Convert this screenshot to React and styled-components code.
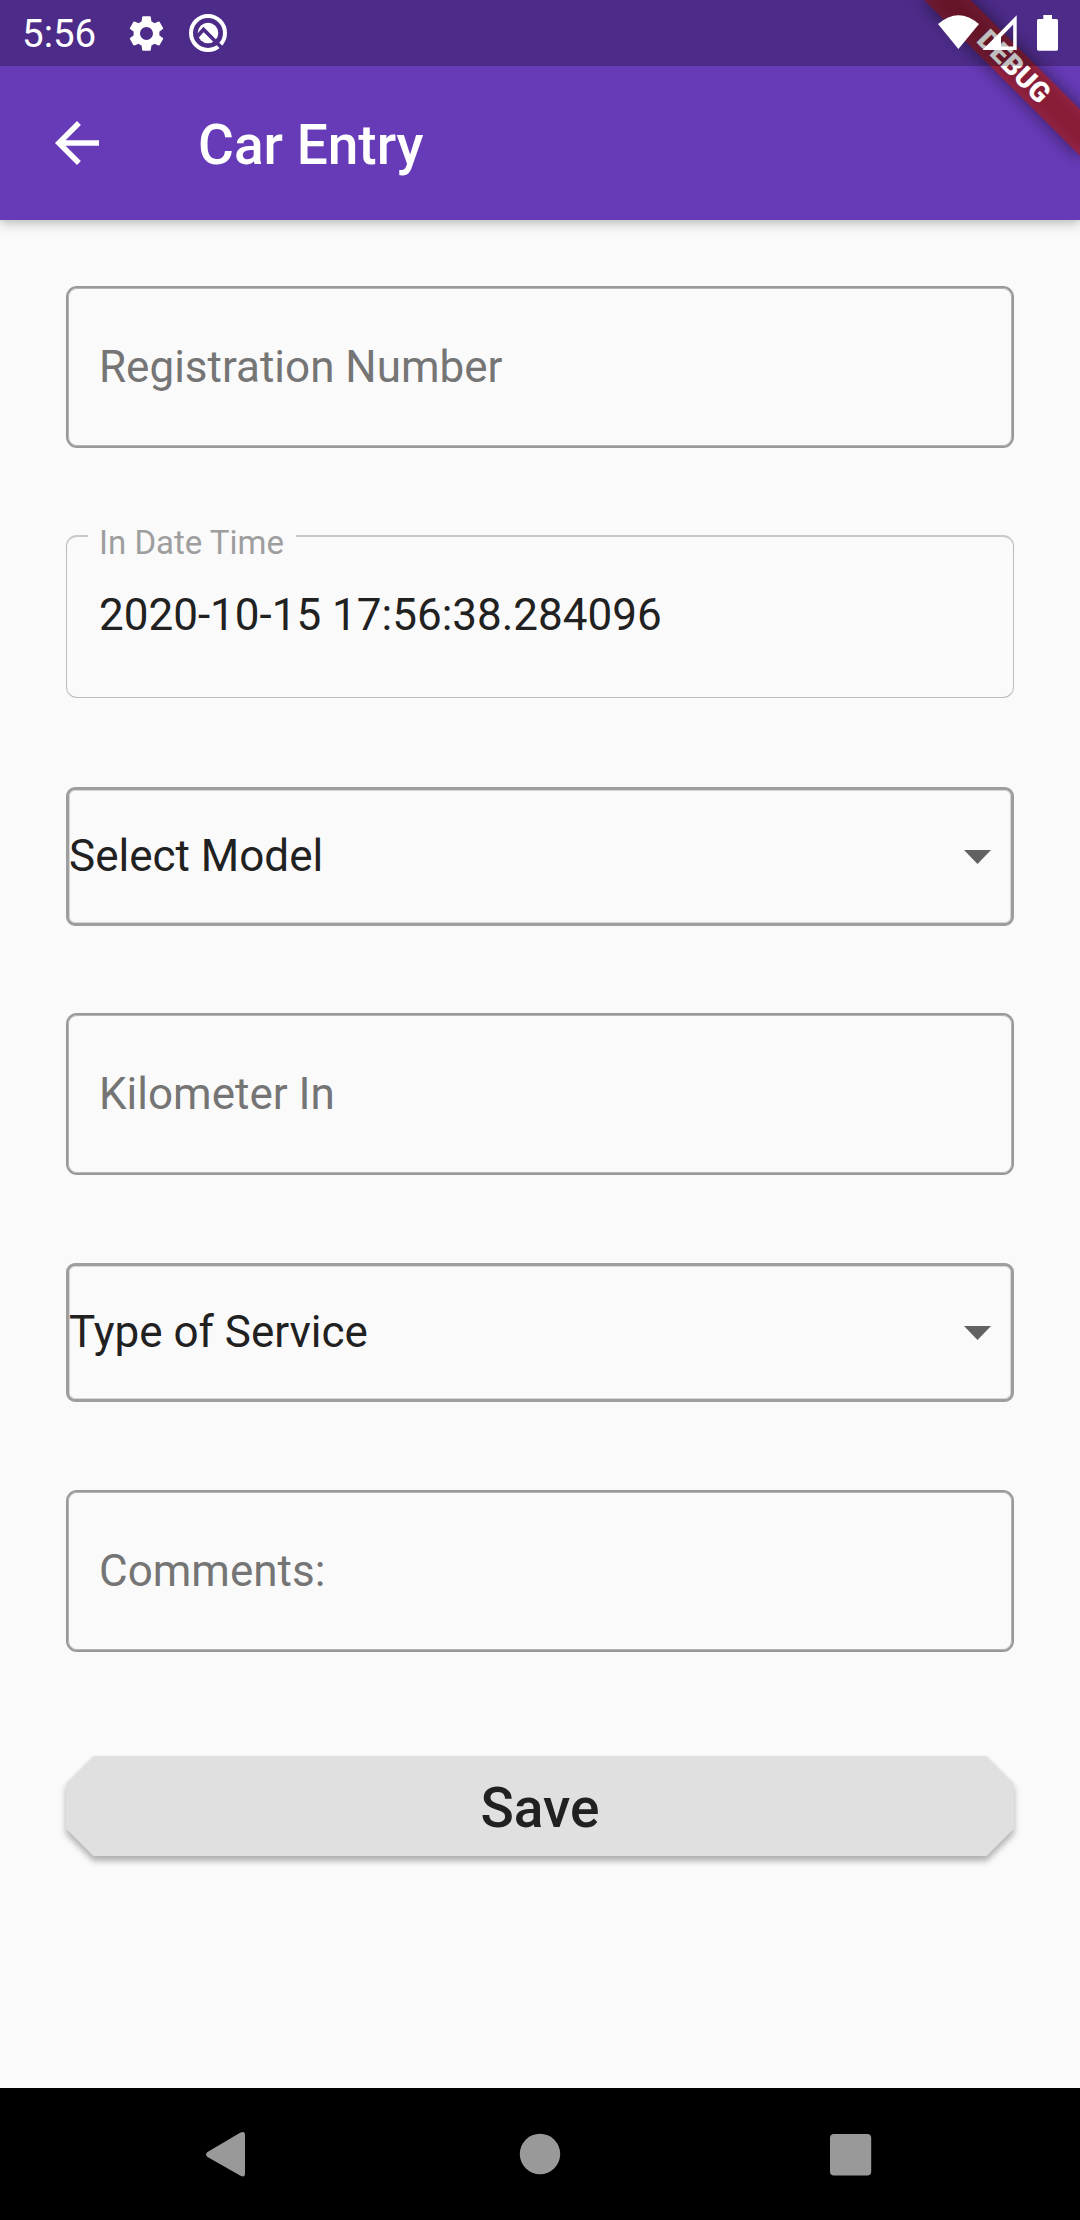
import React from "react";
import styled, { createGlobalStyle } from "styled-components";
import { MdArrowBack, MdSettings } from "react-icons/md";

const GlobalStyle = createGlobalStyle`
  *, *::before, *::after { box-sizing: border-box; }
  body { margin: 0; background: #fafafa; }
`;

const Screen = styled.div`
  width: 1080px;
  height: 2220px;
  display: flex;
  flex-direction: column;
  background: #fafafa;
  color: #212121;
  font-family: Roboto, "Liberation Sans", sans-serif;
  font-size: 44px;
  overflow: hidden;
`;

const Header = styled.header`
  position: relative;
  flex: none;
  height: 220px;
  background: #673ab7;
  color: #fff;
  box-shadow: 0 4px 12px rgba(0, 0, 0, 0.2), 0 2px 6px rgba(0, 0, 0, 0.08);
`;

const StatusBar = styled.div`
  position: relative;
  z-index: 2;
  height: 66px;
  padding: 0 21px 0 22px;
  display: flex;
  align-items: center;
  justify-content: space-between;
  background: rgba(0, 0, 0, 0.25);
`;

const StatusGroup = styled.div`
  display: flex;
  align-items: center;
`;

const Clock = styled.span`
  width: 103px;
  font-size: 38.5px;
  line-height: 66px;
  padding-top: 2px;
`;

const GearIcon = styled(MdSettings)`
  width: 43px;
  height: 43px;
  margin-right: 20px;
`;

const AppBar = styled.div`
  height: 154px;
  padding-left: 44px;
  display: flex;
  align-items: center;
`;

const BackIcon = styled(MdArrowBack)`
  width: 66px;
  height: 66px;
`;

const Title = styled.h1`
  margin: 0 0 0 88px;
  font-size: 55px;
  font-weight: 500;
  line-height: 64px;
  padding-top: 3px;
`;

const BannerClip = styled.div`
  position: absolute;
  inset: 0;
  overflow: hidden;
  pointer-events: none;
`;

const Banner = styled.div`
  position: absolute;
  left: 904px;
  top: 49.5px;
  width: 220px;
  height: 33px;
  transform: rotate(45deg);
  background: rgba(183, 28, 28, 0.63);
  text-align: center;
  font-size: 28px;
  font-weight: 900;
  line-height: 33px;
`;

const BannerShadow = styled(Banner)`
  background: rgba(0, 0, 0, 0.5);
  filter: blur(9px);
`;

const Form = styled.main`
  flex: 1;
  padding: 66px 66px 0;
  display: flex;
  flex-direction: column;
`;

const TextField = styled.div`
  height: 162px;
  margin-bottom: ${(p) => p.$gap}px;
  padding: 0 31px;
  display: flex;
  align-items: center;
  border: 2px solid #999;
  border-radius: 11px;
  box-shadow: inset 0 0 0 1px #b5b5b5;
  color: #757575;
  line-height: 52px;
`;

const DisabledField = styled.div`
  position: relative;
  height: 163px;
  margin-bottom: ${(p) => p.$gap}px;
  padding: 52px 32px 0;
  border: 1px solid #bdbdbd;
  border-top: 2px solid #c8c8c8;
  border-radius: 11px;
  line-height: 52px;
`;

const FieldLabel = styled.span`
  position: absolute;
  top: -13px;
  left: 21px;
  width: 208px;
  padding-left: 11px;
  background: #fafafa;
  font-size: 33px;
  line-height: 38px;
  white-space: nowrap;
  color: #9e9e9e;
`;

const Dropdown = styled.div`
  height: 139px;
  margin-bottom: ${(p) => p.$gap}px;
  padding: 0 20px 2px 0;
  display: flex;
  align-items: center;
  justify-content: space-between;
  border: 3px solid #9e9e9e;
  border-radius: 9px;
  box-shadow: inset 0 0 0 1px #d5d5d5;
  line-height: 52px;
`;

const CaretIcon = styled.svg`
  width: 27px;
  height: 14px;
  margin-top: 3px;
`;

const ButtonShadow = styled.div`
  filter: drop-shadow(0 5px 3px rgba(0, 0, 0, 0.3));
`;

const SaveButton = styled.button`
  display: block;
  width: 100%;
  height: 100px;
  padding: 3px 0 0;
  border: 0;
  background: #e0e0e0;
  color: #212121;
  font: 500 55px/64px Roboto, "Liberation Sans", sans-serif;
  clip-path: polygon(27.5px 0, calc(100% - 27.5px) 0, 100% 27.5px, 100% calc(100% - 27.5px), calc(100% - 27.5px) 100%, 27.5px 100%, 0 calc(100% - 27.5px), 0 27.5px);
`;

const NavBar = styled.nav`
  flex: none;
  height: 132px;
  padding: 0 154px;
  display: flex;
  align-items: center;
  justify-content: space-between;
  background: #000;
`;

function DebugLogo() {
  return (
    <svg width="40" height="40" viewBox="0 0 40 40" fill="none">
      <circle cx="20" cy="20" r="17" stroke="#fff" strokeWidth="4" />
      <circle cx="20" cy="20" r="10.3" fill="#fff" />
      <path d="M8 25 L15.5 16.5 L35 36" stroke="#4d2c89" strokeWidth="3.6" />
    </svg>
  );
}

function StatusIcons() {
  return (
    <svg width="122" height="40" viewBox="937 13 122 40" fill="#fff">
      <path d="M938 24 Q958.5 6.5 979 24 L958.4 49 Z" />
      <path fillRule="evenodd" d="M982.5 50 L1016.7 15.2 V50 Z M1001 46.5 H1013.2 V24.5 L1001 37 Z" />
      <path d="M1043.3 15 H1052 V19 H1056.5 Q1058 19 1058 20.5 V49 Q1058 50.7 1056.5 50.7 H1038.5 Q1037 50.7 1037 49 V20.5 Q1037 19 1038.5 19 H1043.3 Z" />
    </svg>
  );
}

function Caret() {
  return (
    <CaretIcon viewBox="0 0 27 14">
      <path d="M0 0 H27 L13.5 14 Z" fill="#616161" />
    </CaretIcon>
  );
}

export default function App() {
  return (
    <Screen>
      <GlobalStyle />
      <Header>
        <BannerClip>
          <BannerShadow />
          <Banner>DEBUG</Banner>
        </BannerClip>
        <StatusBar>
          <StatusGroup>
            <Clock>5:56</Clock>
            <GearIcon />
            <DebugLogo />
          </StatusGroup>
          <StatusIcons />
        </StatusBar>
        <AppBar>
          <BackIcon />
          <Title>Car Entry</Title>
        </AppBar>
      </Header>
      <Form>
        <TextField $gap={87}>Registration Number</TextField>
        <DisabledField $gap={89}>
          <FieldLabel>In Date Time</FieldLabel>
          2020-10-15 17:56:38.284096
        </DisabledField>
        <Dropdown $gap={87}>
          Select Model
          <Caret />
        </Dropdown>
        <TextField $gap={88}>Kilometer In</TextField>
        <Dropdown $gap={88}>
          Type of Service
          <Caret />
        </Dropdown>
        <TextField $gap={104}>Comments:</TextField>
        <ButtonShadow>
          <SaveButton type="button">Save</SaveButton>
        </ButtonShadow>
      </Form>
      <NavBar>
        <svg width="144" height="48" viewBox="154 2130 144 48" fill="#999">
          <path d="M207.5 2152 L240.5 2132.6 Q245 2130.5 245 2135 V2173.5 Q245 2178 240.5 2175.8 L207.5 2157 Q204.5 2154.5 207.5 2152 Z" />
        </svg>
        <svg width="144" height="48" viewBox="468 2130 144 48" fill="#999">
          <circle cx="540" cy="2154" r="20.2" />
        </svg>
        <svg width="144" height="48" viewBox="782 2130 144 48" fill="#999">
          <rect x="830" y="2134" width="41.2" height="41.4" rx="4" />
        </svg>
      </NavBar>
    </Screen>
  );
}
